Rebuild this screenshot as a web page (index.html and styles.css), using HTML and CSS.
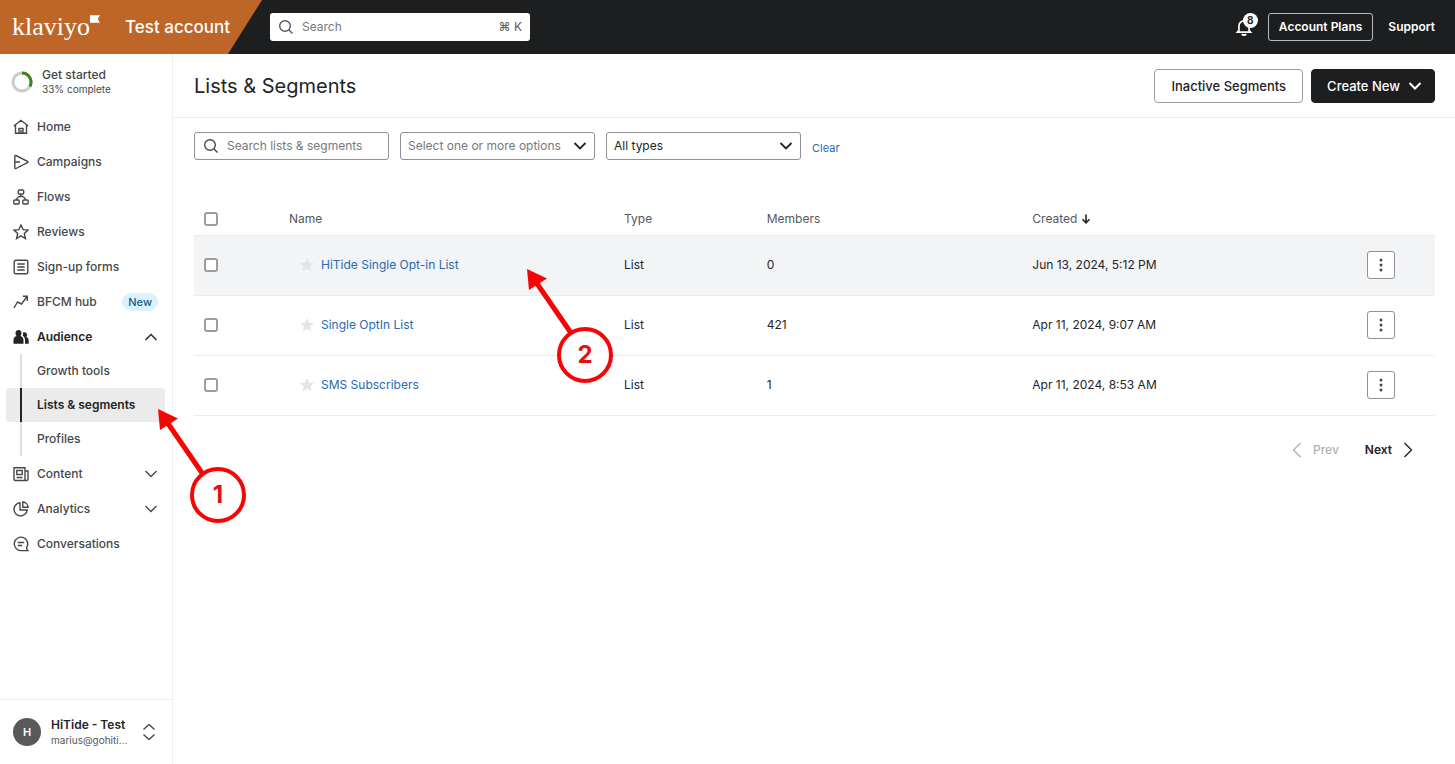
FILE: index.html
```html
<!DOCTYPE html>
<html lang="en">
<head>
<meta charset="utf-8">
<meta name="viewport" content="width=device-width, initial-scale=1">
<title>Lists &amp; Segments</title>
<link rel="stylesheet" href="styles.css">
</head>
<body>
<svg class="defs" aria-hidden="true">
  <symbol id="chev-down" viewBox="0 0 14 14"><path d="M1.5 4l5.500 5.500L12.500 4"/></symbol>
  <symbol id="search" viewBox="0 0 16 16"><circle cx="7" cy="7" r="5.300"/><path d="M11 11l3.500 3.500"/></symbol>
  <symbol id="dots" viewBox="0 0 16 16"><g fill="#45474a" stroke="none"><circle cx="8" cy="3" r="1.500"/><circle cx="8" cy="8" r="1.500"/><circle cx="8" cy="13" r="1.500"/></g></symbol>
  <symbol id="star" viewBox="0 0 16 16"><path fill="#e3e5e7" stroke="none" d="M8 1l2 4.700 5 .4-3.800 3.300 1.200 5L8 11.700l-4.400 2.700 1.200-5L1 6.100l5-.4z"/></symbol>
</svg>
<div class="page">
  <header class="topbar">
    <div class="brand">
      <a class="logo" href="#">klaviyo<svg viewBox="0 0 11 8" aria-hidden="true"><path d="M0 0h11L8.500 4 11 8H0z"/></svg></a>
      <span class="account">Test account</span>
    </div>
    <label class="global-search">
      <svg class="icon" aria-hidden="true"><use href="#search"/></svg>
      <input type="search" placeholder="Search" aria-label="Search">
      <span class="keys">⌘ K</span>
    </label>
    <div class="top-actions">
      <button class="bell" aria-label="Notifications">
        <svg viewBox="0 0 16 16" aria-hidden="true"><path d="M3.500 11V7a4.500 4.500 0 0 1 9 0v4l1.300 1.500H2.200z"/><path d="M6 14.300c1 1.200 3 1.200 4 0"/></svg>
        <span class="count">8</span>
      </button>
      <button class="plans">Account Plans</button>
      <a class="support" href="#">Support</a>
    </div>
  </header>

  <div class="body">
    <aside class="sidebar">
      <a class="start" href="#">
        <svg viewBox="0 0 22 22" aria-hidden="true"><circle cx="11" cy="11" r="9" stroke="#c9ccd0"/><path d="M11 2a9 9 0 0 1 7.800 13.500" stroke="#3f8515"/></svg>
        <span class="start-text"><span>Get started</span><small>33% complete</small></span>
      </a>
      <nav class="nav">
        <a class="item" href="#"><svg class="icon" viewBox="0 0 16 16"><path d="M.8 7L8 1.300 15.200 7M2.500 6v8.200h11V6M6 14V9.500h4V14M8 11v3"/></svg>Home</a>
        <a class="item" href="#"><svg class="icon" viewBox="0 0 16 16"><path d="M1.800 2.200c0-.7.600-1 1.200-.7l11.500 5.800c.600.300.600 1 0 1.300L3 14.500c-.600.300-1.200 0-1.200-.7zM2 8h5"/></svg>Campaigns</a>
        <a class="item" href="#"><svg class="icon" viewBox="0 0 16 16"><rect x="5.300" y="1" width="5.400" height="4" rx="1"/><rect x=".8" y="11" width="5.400" height="4" rx="1"/><rect x="9.800" y="11" width="5.400" height="4" rx="1"/><path d="M8 5v2.500M3.500 11c0-2 1-2.500 2.500-3.500h4c1.500 1 2.500 1.500 2.500 3.500"/></svg>Flows</a>
        <a class="item" href="#"><svg class="icon" viewBox="0 0 16 16"><path d="M8 1l2.100 4.600 4.900.500-3.700 3.400 1.100 5L8 11.900l-4.400 2.600 1.100-5L1 6.100l4.900-.5z"/></svg>Reviews</a>
        <a class="item" href="#"><svg class="icon" viewBox="0 0 16 16"><rect x="1.200" y="1.200" width="13.600" height="13.600" rx="1.500"/><path d="M4.300 5h7.400M4.300 8h7.400M4.300 11h7.400"/></svg>Sign-up forms</a>
        <a class="item" href="#"><svg class="icon" viewBox="0 0 16 16"><path d="M1 14l3.500-6 4 2L14 2.500M9.800 2.300H14.300V7"/></svg>BFCM hub<span class="pill">New</span></a>
        <div class="group">
          <a class="item open" href="#"><svg class="icon solid" viewBox="0 0 16 16"><path d="M5.500 1c2 0 3 1.300 3 3.200 0 1.200-.5 2.200-1.200 2.800 2 .6 3.200 2 3.200 4v3.800H.5V11c0-2 1.200-3.400 3.200-4-.7-.6-1.200-1.600-1.200-2.800C2.500 2.300 3.500 1 5.500 1zM10 3.500c2.200-.8 4 .3 4 2.500 0 1-.3 1.600-.8 2.100 1.500.5 2.500 1.700 2.500 3.400v3.300H12V11c0-1.900-.8-3.300-2.300-4.300.5-1 .6-2.200.3-3.200z"/></svg>Audience<svg class="icon chev flip"><use href="#chev-down"/></svg></a>
          <div class="sub">
            <a href="#">Growth tools</a>
            <a class="current" href="#" aria-current="page">Lists &amp; segments</a>
            <a href="#">Profiles</a>
          </div>
        </div>
        <a class="item" href="#"><svg class="icon" viewBox="0 0 16 16"><path d="M12 14.500V1.800H1V13c0 1 .6 1.500 1.500 1.500h11c1 0 1.500-.6 1.500-1.500V5h-3M3.600 11.500h5.800"/><rect x="3.800" y="4.500" width="5.400" height="4"/></svg>Content<svg class="icon chev"><use href="#chev-down"/></svg></a>
        <a class="item" href="#"><svg class="icon" viewBox="0 0 16 16"><path d="M7 1.800A6.600 6.600 0 1 0 14.200 9H7zM9.800 1v5.300h5.300C15 3.500 12.700 1.200 9.800 1z"/></svg>Analytics<svg class="icon chev"><use href="#chev-down"/></svg></a>
        <a class="item" href="#"><svg class="icon" viewBox="0 0 16 16"><path d="M14.800 14.600H8A6.700 6.700 0 1 1 13.600 11.600c0 1.400.4 2.400 1.200 3zM4.800 6.500h6.400M4.800 9.500h4.400"/></svg>Conversations</a>
      </nav>
      <button class="profile">
        <span class="avatar">H</span>
        <span class="who"><b>HiTide - Test</b><small>marius@gohiti…</small></span>
        <svg class="icon" viewBox="0 0 16 16"><path d="M2.500 5.500L8 0.500l5.500 5M2.500 10.500l5.500 5 5.500-5"/></svg>
      </button>
    </aside>

    <main class="main">
      <div class="heading">
        <h1>Lists &amp; Segments</h1>
        <div class="buttons">
          <button class="btn">Inactive Segments</button>
          <button class="btn dark">Create New<svg class="icon"><use href="#chev-down"/></svg></button>
        </div>
      </div>
      <div class="content">
        <form class="filters">
          <label class="field search">
            <svg class="icon" aria-hidden="true"><use href="#search"/></svg>
            <input type="text" placeholder="Search lists &amp; segments" aria-label="Search lists and segments">
          </label>
          <label class="field pick muted">
            <select aria-label="Tags"><option>Select one or more options</option></select>
            <svg class="icon" aria-hidden="true"><use href="#chev-down"/></svg>
          </label>
          <label class="field pick">
            <select aria-label="Type"><option>All types</option></select>
            <svg class="icon" aria-hidden="true"><use href="#chev-down"/></svg>
          </label>
          <a class="clear" href="#">Clear</a>
        </form>

        <table class="lists">
          <colgroup><col class="c-check"><col class="c-name"><col class="c-type"><col class="c-members"><col class="c-created"><col></colgroup>
          <thead>
            <tr>
              <th><input type="checkbox" aria-label="Select all"></th>
              <th>Name</th><th>Type</th><th>Members</th>
              <th>Created <svg class="sort" viewBox="0 0 10 10"><path d="M5 .5v8M1.500 5.300L5 8.800l3.500-3.500"/></svg></th>
              <th></th>
            </tr>
          </thead>
          <tbody>
            <tr class="hover">
              <td><input type="checkbox" aria-label="Select HiTide Single Opt-in List"></td>
              <td><span class="name"><svg class="icon"><use href="#star"/></svg><a href="#">HiTide Single Opt-in List</a></span></td>
              <td>List</td><td>0</td><td>Jun 13, 2024, 5:12 PM</td>
              <td><button class="more" aria-label="More"><svg class="icon"><use href="#dots"/></svg></button></td>
            </tr>
            <tr>
              <td><input type="checkbox" aria-label="Select Single OptIn List"></td>
              <td><span class="name"><svg class="icon"><use href="#star"/></svg><a href="#">Single OptIn List</a></span></td>
              <td>List</td><td>421</td><td>Apr 11, 2024, 9:07 AM</td>
              <td><button class="more" aria-label="More"><svg class="icon"><use href="#dots"/></svg></button></td>
            </tr>
            <tr>
              <td><input type="checkbox" aria-label="Select SMS Subscribers"></td>
              <td><span class="name"><svg class="icon"><use href="#star"/></svg><a href="#">SMS Subscribers</a></span></td>
              <td>List</td><td>1</td><td>Apr 11, 2024, 8:53 AM</td>
              <td><button class="more" aria-label="More"><svg class="icon"><use href="#dots"/></svg></button></td>
            </tr>
          </tbody>
        </table>

        <div class="pager">
          <button disabled><svg class="icon" viewBox="0 0 16 16"><path d="M11.500 1l-7 7 7 7"/></svg>Prev</button>
          <button>Next<svg class="icon" viewBox="0 0 16 16"><path d="M4.500 1l7 7-7 7"/></svg></button>
        </div>
      </div>
    </main>
  </div>

  <svg class="callout one" viewBox="0 0 90 116" aria-label="Step 1">
    <path class="line" d="M44 65L9 14"/><path class="tip" d="M0 1l20 9.500L2 22z"/>
    <circle cx="60" cy="87" r="26"/><text x="60" y="95">1</text>
  </svg>
  <svg class="callout two" viewBox="0 0 90 116" aria-label="Step 2">
    <path class="line" d="M44 65L9 14"/><path class="tip" d="M0 1l20 9.500L2 22z"/>
    <circle cx="58" cy="87" r="26"/><text x="58" y="95">2</text>
  </svg>
</div>
</body>
</html>
```
FILE: styles.css
```css
* { box-sizing: border-box; }
body { margin: 0; background: #fff; color: #232426; font: 12px/16px Inter, "Liberation Sans", sans-serif; }
button, input, select { font: inherit; color: inherit; }
button { cursor: pointer; padding: 0; }
a { color: inherit; text-decoration: none; }
svg { fill: none; stroke: currentColor; }
.defs { position: absolute; width: 0; height: 0; }
.icon { width: 16px; height: 16px; flex: none; stroke-width: 1.4; }

.page { position: relative; display: flex; flex-direction: column; min-height: 100vh; }
.topbar { display: flex; align-items: center; height: 54px; background: #1d1e20; color: #fff; }
.brand { display: flex; align-items: center; width: 262px; height: 54px; padding-left: 12px; background: #bd6628; clip-path: polygon(0 0, 100% 0, 228px 100%, 0 100%); }
.logo { display: flex; width: 113px; font: 26px/40px "Liberation Serif", serif; }
.logo svg { width: 10px; height: 8px; margin-top: 8px; fill: #fff; stroke: none; }
.account { font-size: 17px; line-height: 24px; font-weight: 500; }
.global-search { display: flex; align-items: center; width: 260px; height: 28px; margin-left: 8px; padding: 0 8px; gap: 8px; border-radius: 3px; background: #fff; color: #55585c; }
.global-search input, .search input { flex: 1; min-width: 0; padding: 0; border: 0; outline: 0; background: none; }
input::placeholder { color: #77797d; opacity: 1; }
.top-actions { display: flex; align-items: center; gap: 15px; margin-left: auto; padding-right: 20px; font-weight: 600; }
.bell { position: relative; width: 18px; height: 18px; border: 0; background: none; color: #fff; }
.bell svg { display: block; width: 18px; height: 18px; stroke-width: 1.5; }
.count { position: absolute; top: -5px; left: 8px; width: 15px; height: 15px; border-radius: 50%; background: #fff; color: #232426; font: 700 10px/15px Inter, sans-serif; text-align: center; }
.plans { height: 28px; padding: 0 10px; border: 1px solid #b9bbbd; border-radius: 3px; background: none; color: #fff; }

.body { display: flex; flex: 1; }
.sidebar { display: flex; flex-direction: column; width: 173px; border-right: 1px solid #f0f0f1; color: #45474a; font-weight: 500; }
.start { display: flex; align-items: center; gap: 9px; height: 56px; padding-left: 11px; }
.start svg { width: 22px; height: 22px; stroke-width: 3; }
.start-text { display: grid; line-height: 14px; }
small { font-size: 10px; line-height: 14px; font-weight: 400; }
.nav { display: grid; gap: 1px; }
.item { display: flex; align-items: center; gap: 8px; height: 34px; padding: 0 14px 0 13px; }
.open, .current { color: #232426; font-weight: 600; }
.solid { fill: currentColor; stroke: none; }
.chev { width: 14px; height: 14px; margin-left: auto; }
.flip { transform: scaleY(-1); }
.pill { margin-left: auto; padding: 0 6px; border-radius: 9px; background: #d9f3fd; color: #23568a; font-size: 11px; line-height: 18px; }
.sub { display: grid; margin: 0 7px 0 6px; background: linear-gradient(#dcdde0, #dcdde0) 14px 0 / 2px 100% no-repeat; }
.sub a { height: 34px; padding-left: 31px; line-height: 34px; }
.sub .current { border-radius: 4px; background: linear-gradient(#232426, #232426) 14px 0 / 2px 100% no-repeat #ebebec; }
.profile { display: flex; align-items: center; height: 65px; margin-top: auto; padding: 0 15px 0 13px; border: 0; border-top: 1px solid #ececee; background: none; text-align: left; }
.avatar { width: 28px; height: 28px; border-radius: 50%; background: #58595b; color: #fff; font-size: 11px; line-height: 28px; font-weight: 600; text-align: center; }
.who { display: grid; margin: 0 auto 0 10px; color: #55585c; }
.who b { color: #232426; font-weight: 600; }

.main { flex: 1; min-width: 0; }
.heading { display: flex; align-items: center; justify-content: space-between; height: 64px; padding: 0 20px 0 21px; border-bottom: 1px solid #ececee; }
h1 { margin: 0; font-size: 20px; line-height: 28px; font-weight: 400; }
.buttons { display: flex; gap: 8px; }
.btn { display: flex; align-items: center; gap: 8px; height: 34px; padding: 0 16px; border: 1px solid #9a9c9f; border-radius: 4px; background: #fff; font-size: 13px; font-weight: 500; }
.btn.dark { padding: 0 12px 0 15px; border-color: #1d1e20; background: #1d1e20; color: #fff; }
.btn .icon { width: 14px; height: 14px; stroke-width: 2; }
.content { padding: 14px 20px 0 21px; }
.filters { display: flex; align-items: center; gap: 11px; }
.field { display: grid; align-items: center; width: 195px; height: 28px; border: 1px solid #8f9194; border-radius: 3px; }
.field.search { display: flex; gap: 8px; padding: 0 8px; color: #45474a; }
.pick > * { grid-area: 1 / 1; }
.pick .icon { justify-self: end; width: 14px; height: 14px; margin-right: 7px; stroke-width: 1.8; pointer-events: none; }
.pick select { width: 100%; height: 26px; padding: 0 24px 0 7px; border: 0; outline: 0; appearance: none; background: none; }
.muted select { color: #77797d; }
.clear { padding-top: 3px; font-size: 11px; }
.clear, .name a { color: #2969b0; }

.lists { width: 100%; margin-top: 43px; border-collapse: collapse; table-layout: fixed; }
.c-check { width: 95px; }
.c-name, .c-created { width: 27%; }
.c-type { width: 11.5%; }
.c-members { width: 21.4%; }
th, td { padding: 0; border-bottom: 1px solid #ececee; text-align: left; }
th { height: 32px; color: #55585c; font-weight: 400; }
td { height: 60px; }
.hover td { background: #f3f4f6; }
.lists input { display: block; width: 14px; height: 14px; margin: 0 0 0 10px; border: 2px solid #9b9da0; border-radius: 3px; appearance: none; background: #fff; }
.name { display: flex; align-items: center; gap: 6px; padding-left: 10px; }
.sort { width: 10px; height: 10px; color: #232426; stroke-width: 1.6; vertical-align: -1px; }
.more { display: grid; place-items: center; width: 28px; height: 28px; border: 1px solid #8f9194; border-radius: 3px; background: #fff; }
.pager { display: flex; justify-content: flex-end; gap: 26px; padding: 26px 19px 0 0; }
.pager button { display: flex; align-items: center; gap: 8px; border: 0; background: none; font-weight: 600; }
.pager button:disabled { color: #afb1b4; font-weight: 500; }

.callout { position: absolute; width: 90px; height: 116px; stroke: #f70505; pointer-events: none; }
.callout circle { fill: #fff; stroke-width: 4; }
.callout .line { stroke-width: 5; }
.callout .tip { fill: #f70505; stroke: none; }
.callout text { fill: #e31010; stroke: none; font: 700 24px Inter, sans-serif; text-anchor: middle; }
.one { top: 408px; left: 158px; }
.two { top: 268px; left: 527px; }
```
